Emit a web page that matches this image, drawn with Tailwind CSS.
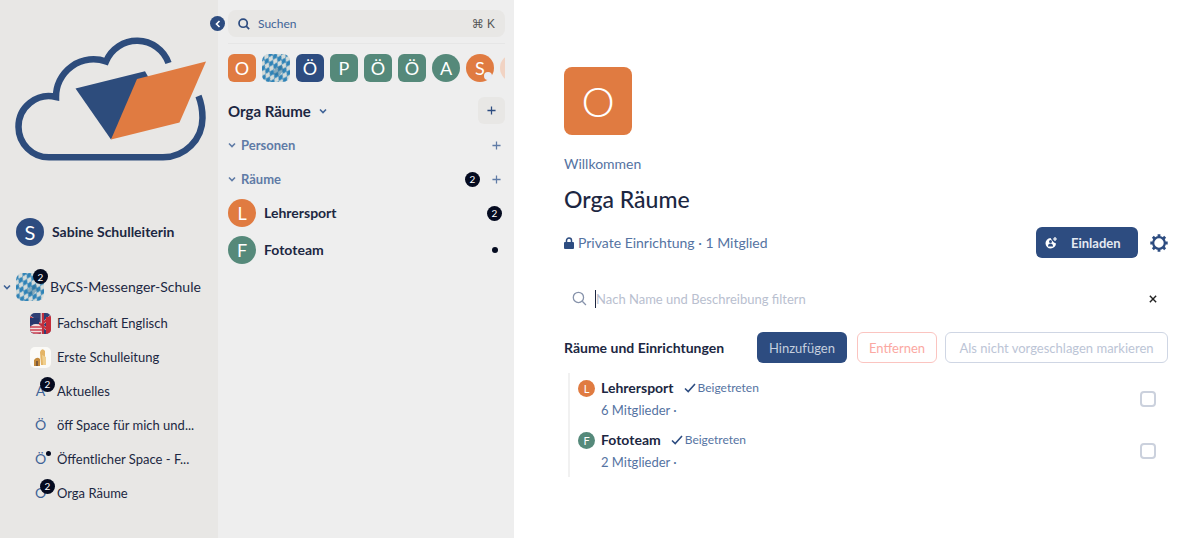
<!DOCTYPE html>
<html lang="de">
<head>
  <meta charset="utf-8">
  <meta name="viewport" content="width=device-width, initial-scale=1.0">
  <title>Orga Räume</title>
  <script src="https://cdn.jsdelivr.net/npm/@tailwindcss/browser@4"></script>
</head>
<body class="flex min-h-screen bg-white font-['Lato',sans-serif] text-sm leading-5 text-[#1c2742]">
  <!-- Shared icons -->
  <svg class="absolute size-0" aria-hidden="true">
    <symbol id="chevron" viewBox="0 0 8 8"><path d="M1 2.5 4 5.5 7 2.5" fill="none" stroke="currentColor" stroke-width="1.6"/></symbol>
    <symbol id="plus" viewBox="0 0 10 10"><path d="M5 .5v9M.5 5h9" stroke="currentColor" stroke-width="1.4"/></symbol>
    <symbol id="check" viewBox="0 0 12 10"><path d="M1 5.5 4.2 8.6 11 1" fill="none" stroke="currentColor" stroke-width="1.6"/></symbol>
    <symbol id="search" viewBox="0 0 14 14"><circle cx="6" cy="6" r="4.8" fill="none" stroke="currentColor" stroke-width="var(--sw, 2)"/><path d="M9.6 9.6 13 13" stroke="currentColor" stroke-width="var(--sw, 2)"/></symbol>
    <pattern id="lozenges" width="5" height="8" patternUnits="userSpaceOnUse" patternTransform="rotate(28)">
      <rect width="5" height="8" fill="#d5dcda"/>
      <path d="M2.5 0 5 4 2.5 8 0 4z" fill="#2f83b7"/>
    </pattern>
    <symbol id="bavaria" viewBox="0 0 28 28">
      <rect width="28" height="28" rx="7" fill="url(#lozenges)"/>
      <path d="M13 14l7-3 2 5-5 6-6-2z" fill="#2b6d94" fill-opacity=".45"/>
    </symbol>
  </svg>

  <!-- Spaces -->
  <aside class="w-[218px] shrink-0 bg-[#e8e7e5] pt-9">
    <svg class="ml-[14px] h-[126px] w-[194px]" viewBox="14 36 194 126" role="img" aria-label="ByCS">
      <path d="M168.500 63A33.500 33.500 0 0 0 106 61.500A37.500 37.500 0 0 0 56 97A30.500 30.500 0 0 0 18.500 127A30.500 30.500 0 0 0 49 157.300H163A39.500 39.500 0 0 0 202.500 118Q202.500 106 198.500 96" fill="none" stroke="#2d4c7c" stroke-width="6.500"/>
      <path d="M75.500 88.500 145 71.300 150 80 111 139.500z" fill="#2d4c7c"/>
      <path d="M137 79 206 61.500 179.500 122.500 111 139.500z" fill="#e07b41"/>
    </svg>

    <div class="mt-[54px] flex h-8 items-center gap-2 pl-4 font-bold">
      <span class="grid size-7 place-items-center rounded-full bg-[#2d4c80] text-xl font-normal text-white">S</span>
      <span>Sabine Schulleiterin</span>
    </div>

    <nav class="mt-[22px]">
      <a href="#" class="flex h-[34px] items-center pl-[3px]">
        <svg class="size-2 text-[#3f6397]"><use href="#chevron"/></svg>
        <span class="relative ml-[5px]">
          <svg class="size-7"><use href="#bavaria"/></svg>
          <span class="absolute -top-1 -right-1 grid size-[15px] place-items-center rounded-full bg-[#050b20] text-[10px] leading-none text-white">2</span>
        </span>
        <span class="ml-1.5">ByCS-Messenger-Schule</span>
      </a>
      <ul class="mt-0.5 pl-[30px] text-[13px]">
        <li><a href="#" class="flex h-[34px] items-center gap-1.5">
          <svg class="size-[21px]" viewBox="0 0 21 21">
            <clipPath id="flag"><rect width="21" height="21" rx="5"/></clipPath>
            <g clip-path="url(#flag)">
              <path fill="#2f3f74" d="M0 0h21v21H0z"/>
              <path d="M0 4 21 19M12 0v21M21 3 9 14" stroke="#d9b9bd" stroke-width="3"/>
              <path d="M0 4 21 19M13 0v21M21 3 9 14" stroke="#c02f3d" stroke-width="2"/>
              <path fill="#c42b38" d="M16 4h5v17h-5z"/>
              <ellipse cx="6" cy="16" rx="6" ry="5" fill="#f0dfdf"/>
              <path d="M0 14h12M0 17h12M1 20h10" stroke="#cc4050" stroke-width="1.300"/>
              <path fill="#27376d" d="M0 5h9v6H0z"/>
            </g>
          </svg>
          Fachschaft Englisch</a></li>
        <li><a href="#" class="flex h-[34px] items-center gap-1.5">
          <svg class="size-[21px]" viewBox="0 0 21 21">
            <rect width="21" height="21" rx="5" fill="#fbfaf7"/>
            <path d="M4 13q3-4 6-1v7H4z" fill="#c48a3c"/>
            <path d="M10 5q2-5 5-1v14h-4z" fill="#e4b466"/>
            <path d="M12 8l4 2v8h-3z" fill="#f0cf8e"/>
            <path d="M6 14h2v5H6z" fill="#7d5a3a"/>
          </svg>
          Erste Schulleitung</a></li>
        <li><a href="#" class="flex h-[34px] items-center gap-1.5">
          <span class="relative grid size-[21px] place-items-center text-sm text-[#3f6397]">A
            <span class="absolute -top-1 -right-1 grid size-[15px] place-items-center rounded-full bg-[#050b20] text-[10px] leading-none text-white">2</span>
          </span>
          Aktuelles</a></li>
        <li><a href="#" class="flex h-[34px] items-center gap-1.5">
          <span class="grid size-[21px] place-items-center text-sm text-[#3f6397]">Ö</span>
          öff Space für mich und...</a></li>
        <li><a href="#" class="flex h-[34px] items-center gap-1.5">
          <span class="relative grid size-[21px] place-items-center text-sm text-[#3f6397]">Ö
            <span class="absolute top-0.5 right-0 size-[5px] rounded-full bg-[#050b20]"></span>
          </span>
          Öffentlicher Space - F...</a></li>
        <li><a href="#" class="flex h-[34px] items-center gap-1.5">
          <span class="relative grid size-[21px] place-items-center text-sm text-[#3f6397]">O
            <span class="absolute -top-1 -right-1 grid size-[15px] place-items-center rounded-full bg-[#050b20] text-[10px] leading-none text-white">2</span>
          </span>
          Orga Räume</a></li>
      </ul>
    </nav>
  </aside>

  <!-- Room list -->
  <section class="relative w-[296px] shrink-0 bg-[#eee] pt-2.5 pr-[9px] pl-2.5">
    <button aria-label="Einklappen" class="absolute top-4 -left-2 grid size-[15px] place-items-center rounded-full bg-[#2d4c80] text-white">
      <svg class="size-2 rotate-90"><use href="#chevron"/></svg>
    </button>
    <button class="flex h-[27px] w-full items-center gap-2 rounded-lg bg-[#e8e7e5] px-2.5 text-xs text-[#3f6397]">
      <svg class="size-3 text-[#2d4c80]"><use href="#search"/></svg>
      Suchen
      <kbd class="ml-auto font-['Liberation_Sans','DejaVu_Sans',sans-serif] text-xs text-[#555]">⌘ K</kbd>
    </button>
    <div class="mt-1.5 flex gap-1.5 overflow-hidden border-t border-[#e6e6e6] pt-2.5 text-lg text-white">
      <a href="#" class="grid size-7 shrink-0 place-items-center rounded-md bg-[#e07b41]">O</a>
      <a href="#" class="size-7 shrink-0" aria-label="ByCS-Messenger-Schule"><svg class="size-7"><use href="#bavaria"/></svg></a>
      <a href="#" class="grid size-7 shrink-0 place-items-center rounded-md bg-[#2d4c80]">Ö</a>
      <a href="#" class="grid size-7 shrink-0 place-items-center rounded-md bg-[#55897a]">P</a>
      <a href="#" class="grid size-7 shrink-0 place-items-center rounded-md bg-[#55897a]">Ö</a>
      <a href="#" class="grid size-7 shrink-0 place-items-center rounded-md bg-[#55897a]">Ö</a>
      <a href="#" class="grid size-7 shrink-0 place-items-center rounded-full bg-[#55897a]">A</a>
      <a href="#" class="relative grid size-7 shrink-0 place-items-center rounded-full bg-[#e07b41]">S
        <span class="absolute right-0.5 bottom-0.5 size-2 rounded-full bg-[#e9ecf5]"></span>
      </a>
      <a href="#" aria-label="Weitere" class="size-7 shrink-0 rounded-full bg-[#f1d3c3]"></a>
    </div>

    <div class="mt-[15px] flex h-[27px] items-center">
      <button class="flex items-center gap-2 text-[15px] font-bold">Orga Räume <svg class="size-2 text-[#3f6397]"><use href="#chevron"/></svg></button>
      <button aria-label="Hinzufügen" class="ml-auto grid size-[27px] place-items-center rounded-md bg-[#e8e7e5] text-[#2d4c80]"><svg class="size-[9px]"><use href="#plus"/></svg></button>
    </div>

    <div class="mt-1 flex h-[34px] items-center pr-1 text-[13px] font-bold text-[#5f7ba6]">
      <svg class="mr-[5px] size-2"><use href="#chevron"/></svg>
      <h2>Personen</h2>
      <button aria-label="Person hinzufügen" class="ml-auto"><svg class="size-[9px]"><use href="#plus"/></svg></button>
    </div>
    <div class="flex h-[34px] items-center pr-1 text-[13px] font-bold text-[#5f7ba6]">
      <svg class="mr-[5px] size-2"><use href="#chevron"/></svg>
      <h2>Räume</h2>
      <span class="ml-auto grid size-[15px] place-items-center rounded-full bg-[#050b20] text-[10px] leading-none font-normal text-white">2</span>
      <button aria-label="Raum hinzufügen" class="ml-3"><svg class="size-[9px]"><use href="#plus"/></svg></button>
    </div>
    <a href="#" class="mt-px flex h-8 items-center gap-2 pr-[3px] font-bold">
      <span class="grid size-7 place-items-center rounded-full bg-[#e07b41] text-lg font-normal text-white">L</span>
      Lehrersport
      <span class="ml-auto grid size-[15px] place-items-center rounded-full bg-[#050b20] text-[10px] leading-none font-normal text-white">2</span>
    </a>
    <a href="#" class="mt-[5px] flex h-8 items-center gap-2 pr-[7px] font-bold">
      <span class="grid size-7 place-items-center rounded-full bg-[#55897a] text-lg font-normal text-white">F</span>
      Fototeam
      <span class="ml-auto size-1.5 rounded-full bg-[#050b20]"></span>
    </a>
  </section>

  <!-- Space overview -->
  <main class="min-w-0 flex-1 pt-[67px] pr-8 pl-[50px]">
    <div class="grid size-[68px] place-items-center rounded-lg bg-[#e07b41] text-[42px] leading-none font-light text-white">O</div>
    <p class="mt-[19px] text-[#5573a2]">Willkommen</p>
    <h1 class="mt-2.5 text-[23px] leading-[30px] font-medium">Orga Räume</h1>

    <div class="mt-[13px] flex h-[31px] items-center text-[#5573a2]">
      <svg class="mr-1 h-3 w-[10px] text-[#2d4c80]" viewBox="0 0 10 12"><rect y="5" width="10" height="7" rx="1" fill="currentColor"/><path d="M2.500 5.500V3.500a2.500 2.500 0 0 1 5 0v2" fill="none" stroke="currentColor" stroke-width="1.500"/></svg>
      <span>Private Einrichtung · 1 Mitglied</span>
      <button class="ml-auto flex h-[31px] w-[102px] items-center rounded-md bg-[#2d4c80] pl-[9px] text-[13px] font-bold text-[#e4e9f2]">
        <svg class="mr-[14px] size-3" viewBox="0 0 12 12"><path d="M5.500 1A5.250 5.250 0 1 0 11 6.500L9 5.500 7.500 4z" fill="#fff"/><circle cx="5.500" cy="4.600" r="1.500" fill="#2d4c80"/><path d="M3 9.500q0-3 2.500-3T8 9.500z" fill="#2d4c80"/><path d="M10 0v4M8 2h4" stroke="#fff" stroke-width="1.200"/></svg>
        Einladen
      </button>
      <button aria-label="Einstellungen" class="ml-3 text-[#2d4c80]">
        <svg class="size-[18px]" viewBox="0 0 18 18"><circle cx="9" cy="9" r="5.800" fill="none" stroke="currentColor" stroke-width="2.200"/><g stroke="currentColor" stroke-width="2.800"><path d="M9 .3v3M9 14.700v3M.3 9h3M14.700 9h3M2.850 2.850l2.100 2.100M13.050 13.050l2.100 2.100M2.850 15.150l2.100-2.100M13.050 4.950l2.100-2.100"/></g></svg>
      </button>
    </div>

    <div class="mt-[25px] flex h-[31px] items-center pr-2.5 pl-2">
      <svg class="mr-2 size-[15px] text-[#8793ab] [--sw:1.2]"><use href="#search"/></svg>
      <input type="text" aria-label="Nach Name und Beschreibung filtern" placeholder="Nach Name und Beschreibung filtern" class="h-[18px] min-w-0 flex-1 border-l border-[#1c2742] text-[13px] outline-none placeholder:text-[#b9c0cf]">
      <button aria-label="Leeren" class="text-[#222]"><svg class="size-[10px] rotate-45"><use href="#plus"/></svg></button>
    </div>

    <div class="mt-[18px] flex h-[31px] items-center text-[13px]">
      <h2 class="mr-auto text-sm font-bold">Räume und Einrichtungen</h2>
      <button class="h-[31px] w-[90px] rounded-md bg-[#2d4c80] text-[#c5cfdf]">Hinzufügen</button>
      <button class="ml-2.5 h-[31px] w-20 rounded-md border border-[#fbc4c0] text-[#fba8a2]">Entfernen</button>
      <button class="ml-2 h-[31px] w-[223px] rounded-md border border-[#cfd6e4] text-[#bcc5d6]">Als nicht vorgeschlagen markieren</button>
    </div>

    <ul class="mt-2.5 ml-1 border-l-2 border-[#f1f1f1] pr-3 pl-2">
      <li class="flex h-[52px] items-center">
        <span class="mr-[6px] mb-[22px] grid size-[17px] place-items-center rounded-full bg-[#e07b41] text-[11px] leading-none text-white">L</span>
        <label for="lehrersport" class="mr-auto leading-[22px]">
          <span class="flex items-center"><b>Lehrersport</b> <svg class="mr-0.5 ml-2.5 h-[10px] w-3 text-[#2d4c80]"><use href="#check"/></svg> <span class="text-xs text-[#5573a2]">Beigetreten</span></span>
          <span class="block text-[13px] text-[#5573a2]">6 Mitglieder ·</span>
        </label>
        <input id="lehrersport" type="checkbox" class="size-4 appearance-none rounded border-2 border-[#cbd1dd]">
      </li>
      <li class="flex h-[52px] items-center">
        <span class="mr-[6px] mb-[22px] grid size-[17px] place-items-center rounded-full bg-[#55897a] text-[11px] leading-none text-white">F</span>
        <label for="fototeam" class="mr-auto leading-[22px]">
          <span class="flex items-center"><b>Fototeam</b> <svg class="mr-0.5 ml-2.5 h-[10px] w-3 text-[#2d4c80]"><use href="#check"/></svg> <span class="text-xs text-[#5573a2]">Beigetreten</span></span>
          <span class="block text-[13px] text-[#5573a2]">2 Mitglieder ·</span>
        </label>
        <input id="fototeam" type="checkbox" class="size-4 appearance-none rounded border-2 border-[#cbd1dd]">
      </li>
    </ul>
  </main>
</body>
</html>
